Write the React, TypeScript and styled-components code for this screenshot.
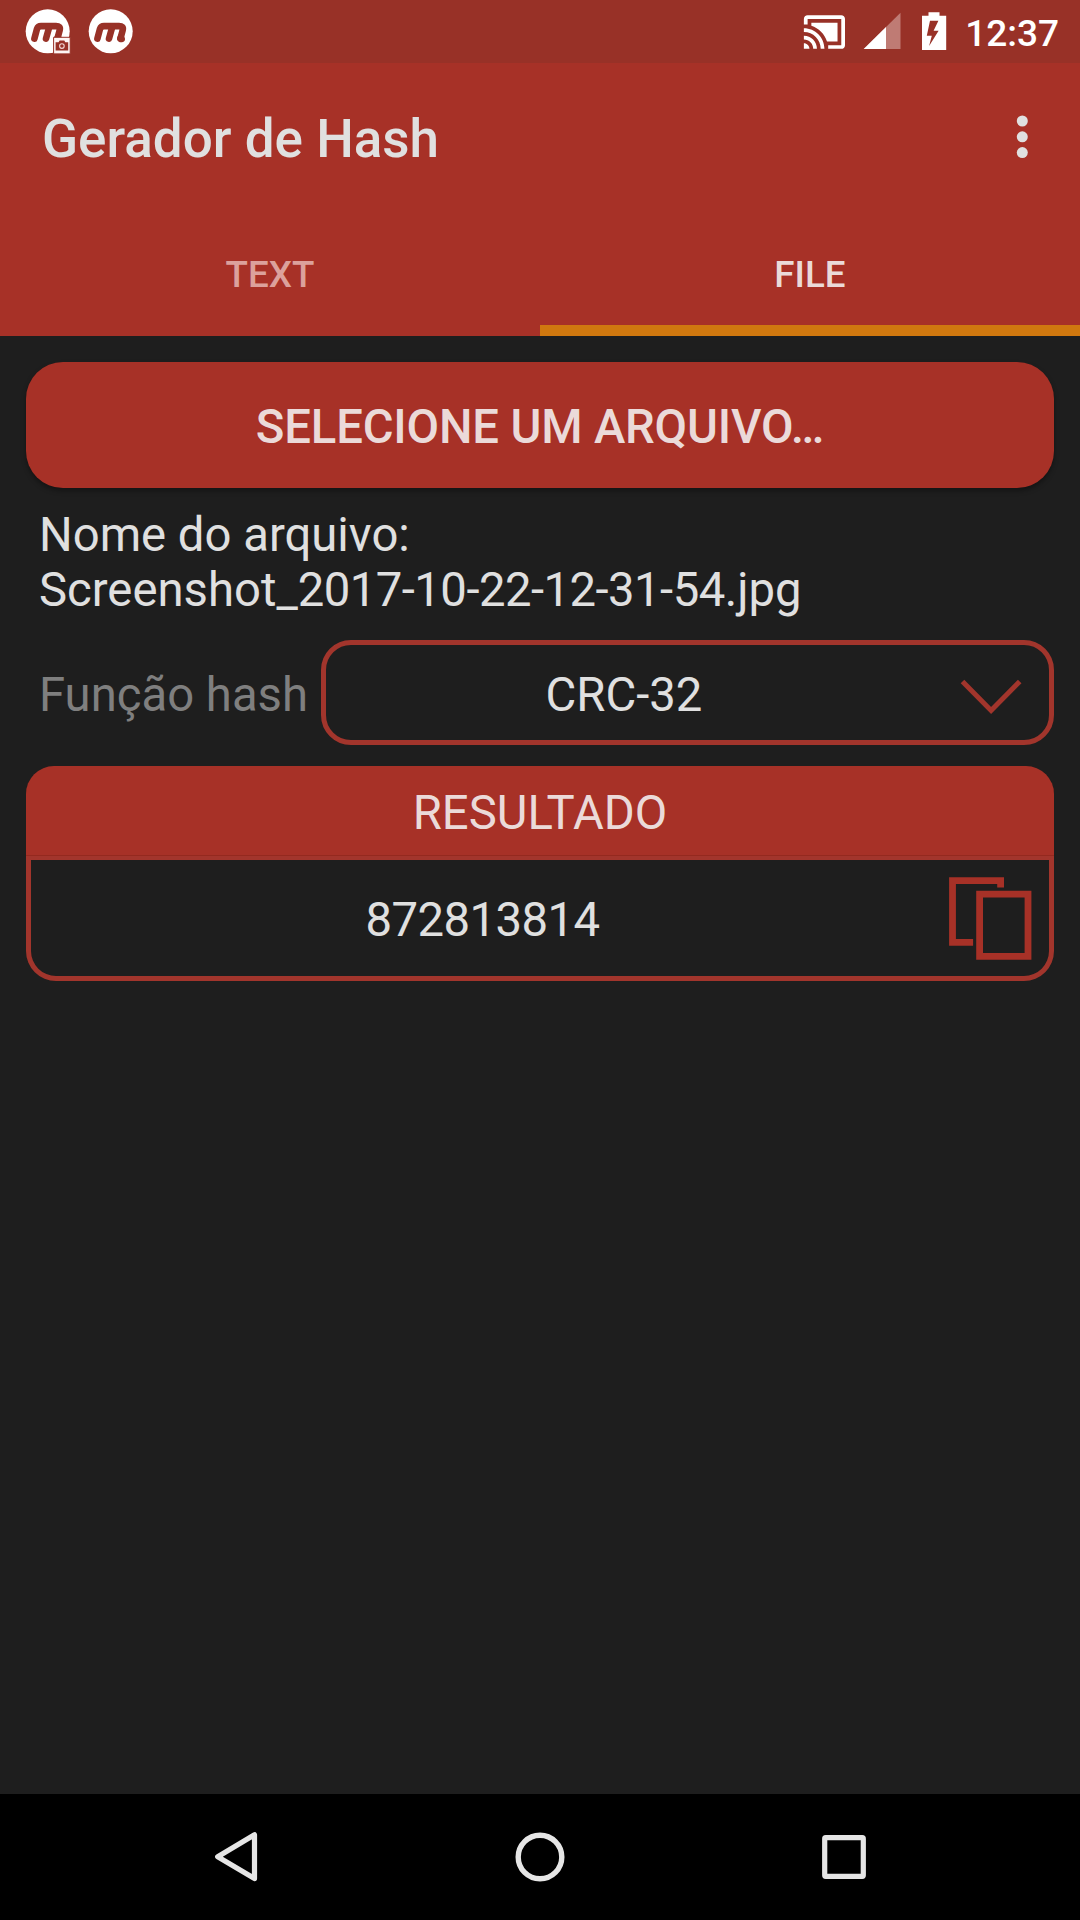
import React from "react";
import styled, { createGlobalStyle } from "styled-components";

const color = {
  primary: "#a73127",
  primaryDark: "#983127",
  outline: "#a2352c",
  seam: "#94291f",
  accent: "#d0780f",
  surface: "#1e1e1e",
  text: "#e0e0e0",
  textOnPrimary: "#ebdad9",
  hint: "#7f7f7f",
};

const GlobalStyle = createGlobalStyle`
  * { box-sizing: border-box; }
  body { margin: 0; background: ${color.surface}; }
  button { border: 0; padding: 0; background: none; font: inherit; color: inherit; }
  svg { display: block; flex: none; }
`;

const Screen = styled.div`
  display: flex;
  flex-direction: column;
  width: 1080px;
  height: 1920px;
  background: ${color.surface};
  color: ${color.text};
  font-family: Roboto, "Liberation Sans", sans-serif;
  font-size: 47.25px;
  line-height: 55px;
`;

const StatusBar = styled.div`
  display: flex;
  justify-content: space-between;
  height: 63px;
  padding: 0 21px 0 25px;
  background: ${color.primaryDark};
`;

const Notifications = styled.div`
  display: flex;
  gap: 17px;
  padding-top: 8px;
`;

const SystemIcons = styled.div`
  display: flex;
  align-items: flex-start;
`;

const Clock = styled.span`
  margin-left: 16px;
  padding-top: 12px;
  color: #fff;
  font-size: 37px;
  font-weight: 500;
  line-height: 43px;
`;

const AppBar = styled.header`
  background: ${color.primary};
`;

const Toolbar = styled.div`
  display: flex;
  align-items: center;
  justify-content: space-between;
  height: 147px;
  padding: 0 52px 0 42px;
`;

const Title = styled.h1`
  margin: 4px 0 0;
  font-size: 53px;
  font-weight: 500;
  line-height: 62px;
`;

const TabList = styled.nav`
  display: flex;
  height: 126px;
`;

const Tab = styled.button<{ $active?: boolean }>`
  flex: 1;
  padding-top: 13px;
  border-bottom: 11px solid ${(p) => (p.$active ? color.accent : color.primary)};
  color: ${(p) => (p.$active ? color.textOnPrimary : "#dca19c")};
  font-size: 36.75px;
  font-weight: 500;
`;

const Content = styled.main`
  display: flex;
  flex: 1;
  flex-direction: column;
  padding: 26px 26px 0;
`;

const SelectFileButton = styled.button`
  height: 126px;
  padding-top: 4px;
  border-radius: 37px;
  background: ${color.primary};
  box-shadow: 0 3px 5px rgba(0, 0, 0, 0.35);
  color: ${color.textOnPrimary};
  font-weight: 500;
  letter-spacing: -0.17px;
`;

const FileName = styled.p`
  margin: 20px 0 0;
  padding: 0 13px;
`;

const Digits = styled.span`
  letter-spacing: -0.53px;
`;

const FunctionRow = styled.div`
  display: flex;
  align-items: center;
  justify-content: space-between;
  height: 105px;
  margin-top: 22px;
  padding-left: 13px;
`;

const Label = styled.span`
  padding-top: 5px;
  color: ${color.hint};
`;

const Select = styled.div`
  display: flex;
  align-items: center;
  gap: 36px;
  width: 733px;
  height: 105px;
  padding: 5px 25px 0 0;
  border: 5px solid ${color.outline};
  border-radius: 30px;
`;

const CenteredValue = styled.span`
  flex: 1;
  text-align: center;
`;

const Result = styled.section`
  margin-top: 21px;
`;

const ResultHeader = styled.div`
  height: 90px;
  padding-top: 20px;
  border-radius: 28px 28px 0 0;
  background: ${color.primary};
  box-shadow: inset 0 -1px ${color.seam};
  color: ${color.textOnPrimary};
  text-align: center;
`;

const ResultBody = styled.div`
  display: flex;
  align-items: center;
  gap: 15px;
  height: 125px;
  padding-right: 17px;
  border: 5px solid ${color.outline};
  border-top-width: 4px;
  border-radius: 0 0 30px 30px;
`;

const ResultValue = styled(CenteredValue)`
  padding-top: 4px;
  letter-spacing: -0.53px;
`;

const NavigationBar = styled.nav`
  display: flex;
  align-items: center;
  justify-content: space-between;
  height: 126px;
  padding: 0 210px;
  background: #000;
`;

function NotificationLogo({ capture }: { capture?: boolean }) {
  return (
    <svg width="46" height="46" viewBox="0 0 46 46" fill="none">
      <circle cx="22.7" cy="23.3" r="22" fill="#fff" />
      <g stroke={color.primaryDark} strokeWidth="6.6" strokeLinecap="round" strokeLinejoin="round">
        <path d="M9.4 30.6 12 20.9q1-2.8 4-2.8h15q4.8 0 3.7 4l-2.2 8.2" />
        <path d="M24.3 18.8 21 30.6M32.4 30.2q-.3 1 1.3.8" />
      </g>
      {capture && (
        <>
          <path d="M28.6 29.3h16.6v16.6H28.6z" fill="#fdf6f5" stroke={color.primaryDark} strokeWidth="1" />
          <path d="M30.6 34.2h3l1-1.8h4.7l1 1.8h2.9v8.2H30.6z" fill={color.primaryDark} />
          <circle cx="36.9" cy="38.1" r="2.3" stroke="#f3d8d5" strokeWidth="1.1" />
        </>
      )}
    </svg>
  );
}

const CastIcon = () => (
  <svg width="45" height="60" viewBox="0 0 45 60" fill="#fff">
    <g transform="translate(0 9.6) scale(1.87)">
      <path d="M1 18v3h3c0-1.66-1.34-3-3-3zm0-4v2c2.76 0 5 2.24 5 5h2c0-3.87-3.13-7-7-7zm18-7H5v1.63c3.96 1.28 7.09 4.41 8.37 8.37H19V7zM1 10v2c4.97 0 9 4.03 9 9h2c0-6.08-4.93-11-11-11zm20-7H3c-1.1 0-2 .9-2 2v3h2V5h18v14h-7v2h7c1.1 0 2-.9 2-2V5c0-1.1-.9-2-2-2z" />
    </g>
  </svg>
);

const SignalIcon = () => (
  <svg width="56" height="60" viewBox="847 0 56 60">
    <path d="M900.5 12.8V49h-36.8z" fill="#bf7b74" />
    <path d="M886 27v22h-22.3z" fill="#fff" />
  </svg>
);

const BatteryIcon = () => (
  <svg width="46" height="60" viewBox="903 0 46 60">
    <path
      d="M928.5 12.3h11v3.4h6.7V50H922V15.7h6.5zM930 20.8l-3.2 15h5l-2.7 10.2 9.5-15.2h-5l4.8-10z"
      fill="#fff"
      fillRule="evenodd"
    />
  </svg>
);

const OverflowIcon = () => (
  <svg width="12" height="46" viewBox="0 0 12 46" fill={color.text}>
    <circle cx="6.3" cy="7" r="5.5" />
    <circle cx="6.3" cy="22.8" r="5.5" />
    <circle cx="6.3" cy="38.6" r="5.5" />
  </svg>
);

const ChevronIcon = () => (
  <svg width="66" height="40" viewBox="958 676 66 40" fill="none">
    <path d="m962.5 682.5 28.6 29 28.6-29" stroke={color.outline} strokeWidth="5" />
  </svg>
);

const CopyIcon = () => (
  <svg width="83" height="83" viewBox="0 0 83 83" fill="none" stroke={color.primary} strokeWidth="6.8">
    <path d="M51.6 10.5V3.6H3.5v61.7h20.6" />
    <path d="M30.6 17.2H79v62.1H30.6z" />
  </svg>
);

const BackIcon = () => (
  <svg width="52" height="52" viewBox="210 1831 52 52" fill="none">
    <path d="M254.5 1834.8v43.8l-36.8-21.9z" stroke="#e6e6e6" strokeWidth="5.2" strokeLinejoin="round" />
  </svg>
);

const HomeIcon = () => (
  <svg width="52" height="52" viewBox="0 0 52 52" fill="none">
    <circle cx="26" cy="26" r="21.8" stroke="#e6e6e6" strokeWidth="5.4" />
  </svg>
);

const RecentsIcon = () => (
  <svg width="52" height="52" viewBox="818 1831 52 52" fill="none">
    <rect
      x="824.7"
      y="1837.7"
      width="38.6"
      height="38.6"
      rx="1"
      stroke="#e6e6e6"
      strokeWidth="5.2"
      strokeLinejoin="round"
    />
  </svg>
);

export default function App() {
  return (
    <Screen>
      <GlobalStyle />
      <StatusBar>
        <Notifications>
          <NotificationLogo capture />
          <NotificationLogo />
        </Notifications>
        <SystemIcons>
          <CastIcon />
          <SignalIcon />
          <BatteryIcon />
          <Clock>12:37</Clock>
        </SystemIcons>
      </StatusBar>
      <AppBar>
        <Toolbar>
          <Title>Gerador de Hash</Title>
          <OverflowIcon />
        </Toolbar>
        <TabList>
          <Tab>TEXT</Tab>
          <Tab $active>FILE</Tab>
        </TabList>
      </AppBar>
      <Content>
        <SelectFileButton>SELECIONE UM ARQUIVO…</SelectFileButton>
        <FileName>
          Nome do arquivo:
          <br />
          Screenshot_<Digits>2017-10-22-12-31-54</Digits>.jpg
        </FileName>
        <FunctionRow>
          <Label>Função hash</Label>
          <Select>
            <CenteredValue>CRC-32</CenteredValue>
            <ChevronIcon />
          </Select>
        </FunctionRow>
        <Result>
          <ResultHeader>RESULTADO</ResultHeader>
          <ResultBody>
            <ResultValue>872813814</ResultValue>
            <CopyIcon />
          </ResultBody>
        </Result>
      </Content>
      <NavigationBar>
        <BackIcon />
        <HomeIcon />
        <RecentsIcon />
      </NavigationBar>
    </Screen>
  );
}
